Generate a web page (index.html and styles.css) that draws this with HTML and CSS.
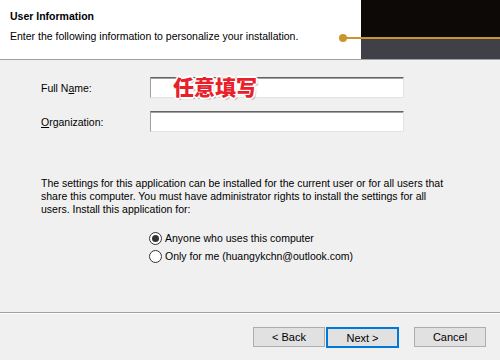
FILE: index.html
```html
<!DOCTYPE html>
<html>
<head>
<meta charset="utf-8">
<link rel="stylesheet" href="styles.css">
</head>
<body>
<div class="dialog">
  <div class="header">
    <div class="header-text">
      <div class="title">User Information</div>
      <div class="subtitle">Enter the following information to personalize your installation.</div>
    </div>
    <div class="banner">
      <div class="banner-top"></div>
      <div class="banner-bottom"></div>
    </div>
    <div class="gold-line"></div>
    <div class="gold-dot"></div>
  </div>
  <div class="body">
    <div class="row">
      <label class="label">Full N<u>a</u>me:</label>
      <div class="input"></div>
      <div class="note">任意填写</div>
    </div>
    <div class="row">
      <label class="label"><u>O</u>rganization:</label>
      <div class="input"></div>
    </div>
    <p class="para">The settings for this application can be installed for the current user or for all users that<br>share this computer. You must have administrator rights to install the settings for all<br>users. Install this application for:</p>
    <div class="radios">
      <div class="radio-row"><span class="radio checked"></span><span>Anyone who uses this computer</span></div>
      <div class="radio-row"><span class="radio"></span><span>Only for me (huangykchn@outlook.com)</span></div>
    </div>
  </div>
  <div class="footer">
    <div class="btn">&lt; Back</div>
    <div class="btn default">Next &gt;</div>
    <div class="btn cancel">Cancel</div>
  </div>
</div>
</body>
</html>
```

FILE: styles.css
```css
html, body {
  margin: 0;
  padding: 0;
}
body {
  width: 500px;
  height: 360px;
  background: #f0f0f0;
  font-family: "Liberation Sans", Arial, sans-serif;
  font-size: 10.5px;
  color: #000;
  overflow: hidden;
}
.dialog {
  display: flex;
  flex-direction: column;
  height: 360px;
}
.header {
  position: relative;
  height: 59px;
  background: #fff;
  border-bottom: 1px solid #a0a0a0;
  display: flex;
  justify-content: space-between;
}
.header-text {
  padding: 10px 0 0 10px;
}
.title {
  font-weight: bold;
  line-height: 13px;
}
.subtitle {
  margin-top: 7px;
  line-height: 13px;
}
.banner {
  width: 139px;
  display: flex;
  flex-direction: column;
}
.banner-top {
  height: 37px;
  background: #0c0906;
}
.banner-bottom {
  flex: 1;
  background: #3f4048;
}
.gold-line {
  position: absolute;
  left: 343px;
  right: 0;
  top: 37px;
  height: 2px;
  background: #c8952f;
}
.gold-dot {
  position: absolute;
  left: 339px;
  top: 34px;
  width: 8px;
  height: 8px;
  border-radius: 50%;
  background: #c8952f;
}
.body {
  flex: 1;
  padding: 17px 0 0 41px;
}
.row {
  position: relative;
  display: flex;
  align-items: center;
  height: 21px;
  margin-bottom: 13px;
}
.label {
  width: 109px;
}
.input {
  width: 252px;
  height: 19px;
  background: #fff;
  border-top: 1px solid #646464;
  border-left: 1px solid #a0a0a0;
  border-right: 1px solid #e3e3e3;
  border-bottom: 1px solid #e3e3e3;
  box-shadow: inset 0 1px 0 #a0a0a0;
}
.note {
  position: absolute;
  left: 132px;
  top: -3px;
  font-family: "Noto Sans CJK SC", sans-serif;
  font-weight: 900;
  font-size: 21px;
  line-height: 25px;
  color: #e8202a;
  text-shadow: 1px 0 0 #fff, -1px 0 0 #fff, 0 1px 0 #fff, 0 -1px 0 #fff, 2px 0 0 #fff, -2px 0 0 #fff, 0 2px 0 #fff, 0 -2px 0 #fff, 1px 1px 0 #fff, -1px -1px 0 #fff, 1px -1px 0 #fff, -1px 1px 0 #fff, 2px 2px 1px #aaa;
}
.para {
  margin: 45px 0 0 0;
  line-height: 13px;
}
.radios {
  margin: 13px 0 0 108px;
}
.radio-row {
  display: flex;
  align-items: center;
  height: 18px;
  gap: 3px;
}
.radio {
  width: 11px;
  height: 11px;
  border: 1px solid #333;
  border-radius: 50%;
  background: #fff;
  position: relative;
  box-sizing: content-box;
}
.radio.checked::after {
  content: "";
  position: absolute;
  left: 2px;
  top: 2px;
  width: 7px;
  height: 7px;
  border-radius: 50%;
  background: #333;
}
.footer {
  height: 48px;
  border-top: 1px solid #a0a0a0;
  box-shadow: inset 0 1px 0 #fff;
  display: flex;
  align-items: flex-start;
  padding: 14px 0 0 253px;
  box-sizing: border-box;
}
.btn {
  width: 70px;
  height: 18px;
  border: 1px solid #adadad;
  background: #e1e1e1;
  display: flex;
  align-items: center;
  justify-content: center;
  font-size: 11px;
}
.btn.default {
  width: 69px;
  height: 17px;
  border: 2px solid #0078d7;
  margin-left: 1px;
}
.btn.cancel {
  margin-left: 15px;
}
```
